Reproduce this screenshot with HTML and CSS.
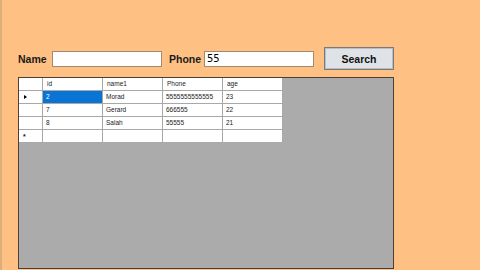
FILE: index.html
```html
<!DOCTYPE html>
<html>
<head>
<meta charset="utf-8">
<link rel="stylesheet" href="styles.css">
</head>
<body>
<div class="page">
  <div class="edge"></div>
  <div class="main">
    <div class="toolbar">
      <span class="label">Name</span>
      <div class="box name-box"></div>
      <span class="label phone-label">Phone</span>
      <div class="box phone-box">55</div>
      <button class="btn">Search</button>
    </div>
    <div class="grid">
      <div class="table">
        <div class="cell rh"></div>
        <div class="cell hd">id</div>
        <div class="cell hd">name1</div>
        <div class="cell hd">Phone</div>
        <div class="cell hd">age</div>

        <div class="cell rh"><span class="arrow"></span></div>
        <div class="cell sel">2</div>
        <div class="cell">Morad</div>
        <div class="cell">5555555555555</div>
        <div class="cell">23</div>

        <div class="cell rh"></div>
        <div class="cell">7</div>
        <div class="cell">Gerard</div>
        <div class="cell">666555</div>
        <div class="cell">22</div>

        <div class="cell rh"></div>
        <div class="cell">8</div>
        <div class="cell">Salah</div>
        <div class="cell">55555</div>
        <div class="cell">21</div>

        <div class="cell rh"><span class="star">*</span></div>
        <div class="cell"></div>
        <div class="cell"></div>
        <div class="cell"></div>
        <div class="cell"></div>
      </div>
    </div>
  </div>
</div>
</body>
</html>
```

FILE: styles.css
```css
html, body {
  margin: 0;
  padding: 0;
  width: 480px;
  height: 270px;
  overflow: hidden;
  background: #fec183;
}
.page {
  display: flex;
  height: 270px;
}
.edge {
  width: 2px;
  background: #dcae7a;
}
.main {
  padding: 47px 0 0 16px;
}
.toolbar {
  display: flex;
  align-items: center;
  height: 23px;
}
.label {
  font-family: "Liberation Sans", sans-serif;
  font-weight: bold;
  font-size: 10.5px;
  color: #1a1a1a;
  width: 34px;
}
.phone-label {
  width: 35px;
  margin-left: 7px;
}
.box {
  box-sizing: border-box;
  width: 110px;
  height: 16px;
  background: #fff;
  border: 1px solid #a28a70;
  font-family: "DejaVu Sans", sans-serif;
  font-size: 10px;
  line-height: 14px;
  padding-left: 2px;
  color: #000;
}
.btn {
  box-sizing: border-box;
  margin-left: 10px;
  width: 70px;
  height: 23px;
  background: #dfe3e8;
  border: 1px solid #7a7a7a;
  box-shadow: inset 0 0 0 1px #b8bec6;
  font-family: "Liberation Sans", sans-serif;
  font-weight: bold;
  font-size: 10.5px;
  color: #111;
  padding: 0;
}
.grid {
  box-sizing: border-box;
  margin-top: 7px;
  width: 376px;
  height: 192px;
  background: #ababab;
  border: 1px solid #4a4038;
}
.table {
  display: grid;
  grid-template-columns: 24px 60px 60px 60px 60px;
  grid-auto-rows: 13px;
  width: 264px;
  background: #fff;
}
.cell {
  box-sizing: border-box;
  border-right: 1px solid #a8a8a8;
  border-bottom: 1px solid #a8a8a8;
  font-family: "Liberation Sans", sans-serif;
  font-size: 6.5px;
  line-height: 12px;
  padding-left: 3px;
  color: #222;
  background: #fff;
  position: relative;
}
.hd {
  padding-left: 4px;
}
.sel {
  background: #0a74d4;
  color: #fff;
}
.arrow {
  position: absolute;
  left: 5px;
  top: 4px;
  width: 0;
  height: 0;
  border-top: 2px solid transparent;
  border-bottom: 2px solid transparent;
  border-left: 3px solid #000;
}
.star {
  position: absolute;
  left: 4px;
  top: 1px;
  font-size: 7px;
  font-weight: bold;
}
```
